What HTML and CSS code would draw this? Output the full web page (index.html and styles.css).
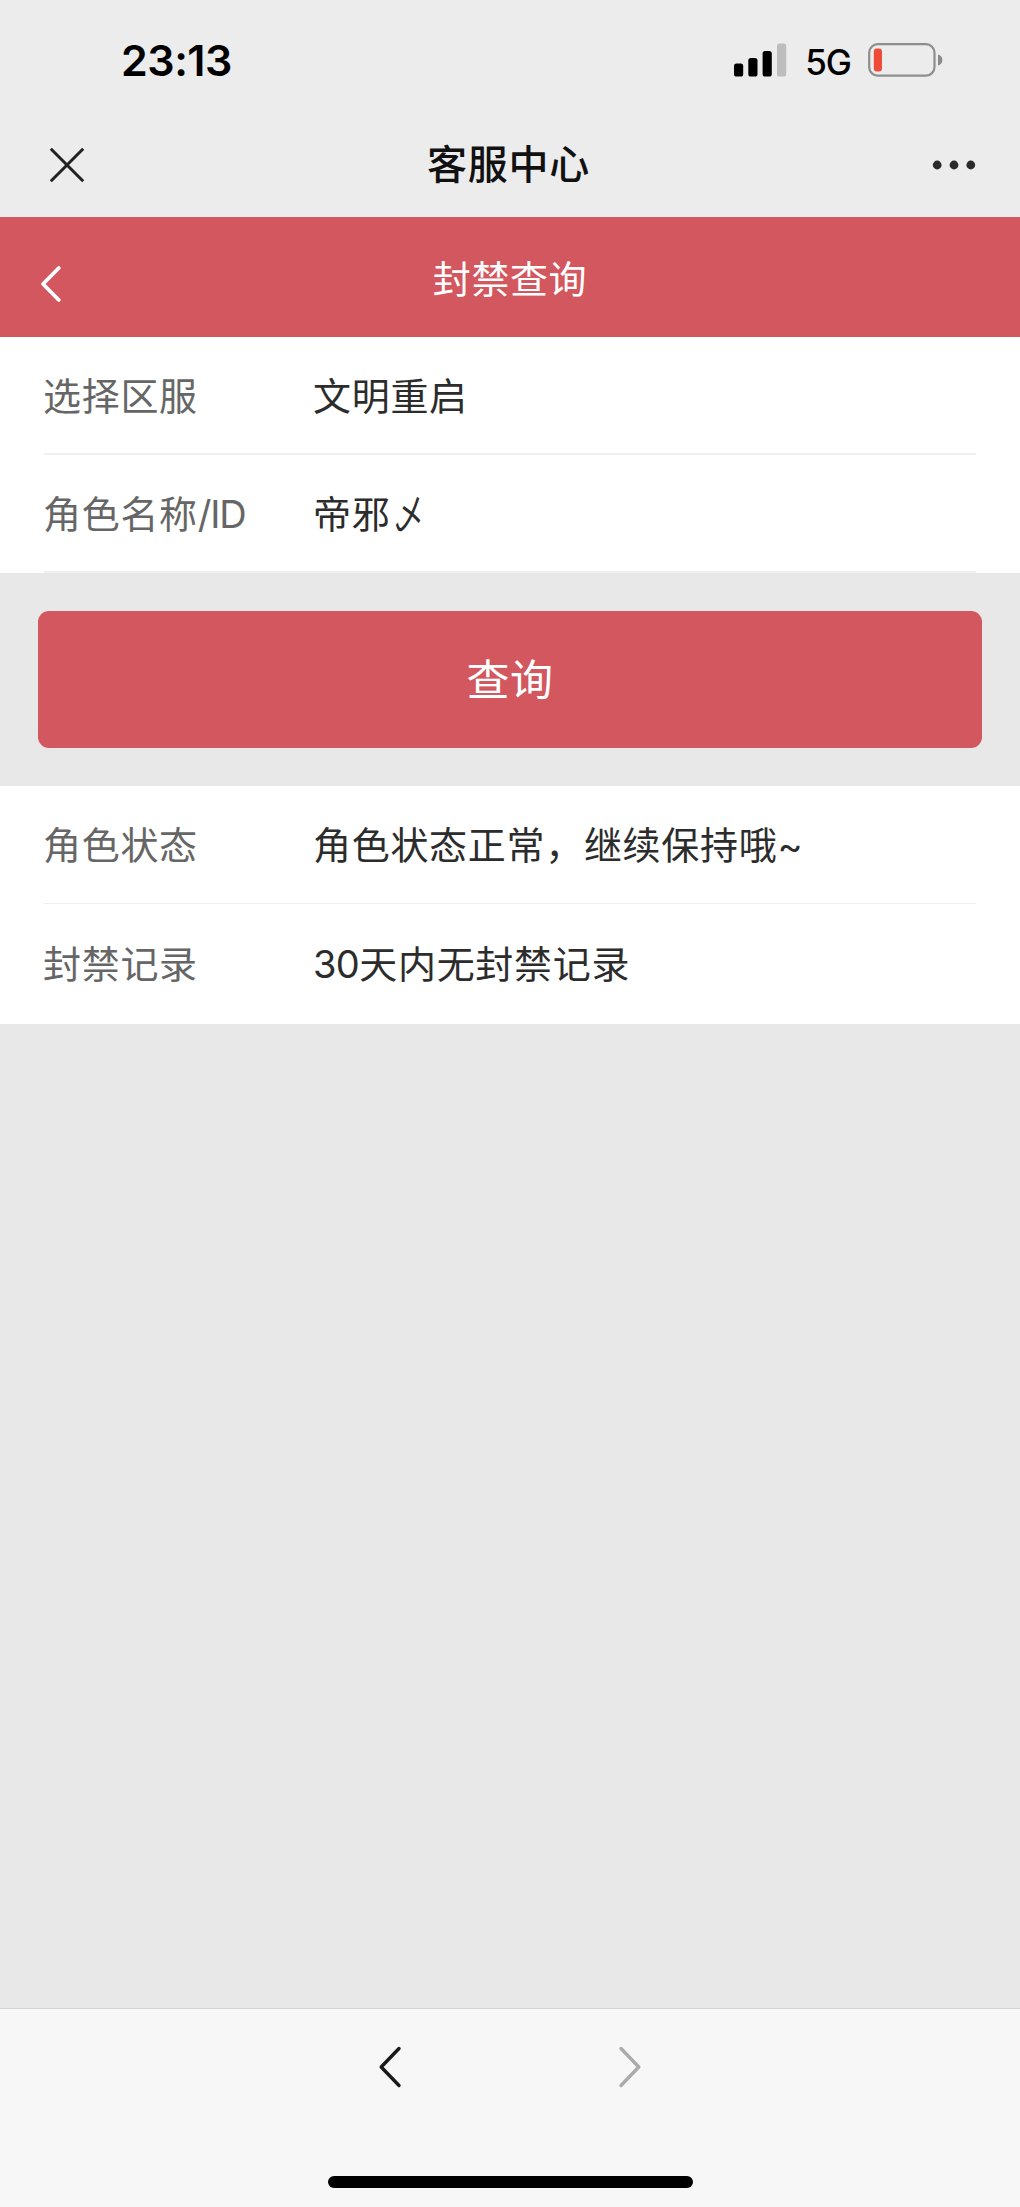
FILE: index.html
```html
<!DOCTYPE html>
<html lang="zh-CN">
<head>
<meta charset="utf-8">
<title>客服中心</title>
<link rel="stylesheet" href="styles.css">
</head>
<body>
<div class="screen">
  <div class="status-bar">
    <span class="time">23:13</span>
    <div class="indicators">
      <svg class="signal" width="53" height="34" viewBox="0 0 53 34">
        <rect x="0" y="20.5" width="9.2" height="13" rx="2.6"/>
        <rect x="14.3" y="15" width="9.2" height="18.5" rx="2.6"/>
        <rect x="28.6" y="8" width="9.2" height="25.5" rx="2.6"/>
        <rect x="43" y="0.5" width="9.2" height="33" rx="2.6" fill="#bdbdbd"/>
      </svg>
      <span class="network">5G</span>
      <svg class="battery" width="75" height="34" viewBox="0 0 75 34">
        <rect x="1.2" y="1.2" width="65.3" height="31.4" rx="8.5" fill="none" stroke="#8e8e8e" stroke-width="2.2"/>
        <rect x="5.8" y="5.6" width="8.2" height="22.8" rx="3.2" fill="#ee4b38"/>
        <path d="M70 11.5C75.8 12.2 75.8 21.8 70 22.5Z" fill="#8a8a8a"/>
      </svg>
    </div>
  </div>
  <div class="nav-bar">
    <svg width="36" height="36" viewBox="0 0 36 36"><path d="M1.8 1.8L34.2 34.2M34.2 1.8L1.8 34.2" fill="none" stroke="#222" stroke-width="3"/></svg>
    <h1 class="nav-title">客服中心</h1>
    <svg width="44" height="12" viewBox="0 0 44 12" fill="#2b2b2b"><circle cx="5.2" cy="6" r="4.4"/><circle cx="22" cy="6" r="4.4"/><circle cx="38.8" cy="6" r="4.4"/></svg>
  </div>
  <header class="page-header">
    <svg class="back" width="22" height="38" viewBox="0 0 22 38"><path d="M18.8 3L3 19L18.8 35" fill="none" stroke="#fff" stroke-width="3.8" stroke-linecap="round" stroke-linejoin="round"/></svg>
    <h2 class="page-title">封禁查询</h2>
  </header>
  <main class="content">
    <section class="panel form">
      <div class="row"><span class="label">选择区服</span><span class="value">文明重启</span></div>
      <div class="row"><span class="label">角色名称<span class="latin">/ID</span></span><span class="value">帝邪<span class="mark">乄</span></span></div>
    </section>
    <div class="action"><button class="query">查询</button></div>
    <section class="panel result">
      <div class="row"><span class="label">角色状态</span><span class="value">角色状态正常，继续保持哦~</span></div>
      <div class="row"><span class="label">封禁记录</span><span class="value"><span class="digits">30</span>天内无封禁记录</span></div>
    </section>
  </main>
  <footer class="toolbar">
    <div class="history">
      <svg width="24" height="42" viewBox="0 0 24 42"><path d="M21 2.5L3.2 21L21 39.5" fill="none" stroke="#1a1a1a" stroke-width="3.4" stroke-linecap="round" stroke-linejoin="round"/></svg>
      <svg width="24" height="42" viewBox="0 0 24 42"><path d="M3 2.5L20.8 21L3 39.5" fill="none" stroke="#ababab" stroke-width="3.4" stroke-linecap="round" stroke-linejoin="round"/></svg>
    </div>
    <div class="home-indicator"></div>
  </footer>
</div>
</body>
</html>
```
FILE: styles.css
```css
* { box-sizing: border-box; }
body {
  margin: 0;
  background: #e8e8e8;
  font-family: Inter, "Noto Sans CJK SC", sans-serif;
  color: #2c2c2c;
}
svg { display: block; flex: none; }
h1, h2 { margin: 0; }
.screen { display: flex; flex-direction: column; height: 2207px; }

.status-bar {
  display: flex;
  justify-content: space-between;
  align-items: center;
  height: 120px;
  padding: 0 77px 0 121px;
  background: #ececec;
  color: #000;
}
.time { font-size: 43px; font-weight: 600; line-height: 52px; padding-bottom: 0; letter-spacing: -0.5px; }
.indicators { display: flex; align-items: center; }
.network { margin: 3px 17px 0 18px; font-size: 35px; font-weight: 500; line-height: 40px; letter-spacing: -1px; }

.nav-bar {
  display: flex;
  justify-content: space-between;
  align-items: center;
  height: 97px;
  padding: 0 44px 8px 49px;
  background: #ececec;
}
.nav-title { font-size: 40px; font-weight: 500; line-height: 58px; letter-spacing: 0.7px; color: #111; }

.page-header {
  display: grid;
  grid-template-columns: 22px 1fr 22px;
  align-items: center;
  height: 120px;
  padding: 4px 40px 0;
  background: #d3575e;
}
.back { margin-top: 9px; }
.page-title {
  font-size: 38px;
  font-weight: 400;
  line-height: 56px;
  letter-spacing: 0.6px;
  text-align: center;
  color: #fff;
}

.content { flex: 1; }
.panel { background: #fff; padding: 0 44px; }
.row {
  display: flex;
  align-items: center;
  height: 118px;
  padding-bottom: 4px;
  border-bottom: 2px solid #efefef;
  font-size: 38px;
  letter-spacing: 0.7px;
}
.result .row { border-bottom-width: 1px; }
.result .row:last-child { height: 120px; padding-bottom: 6px; border-bottom: 0; }
.label { width: 270px; margin-left: -1px; color: #666; }
.latin { letter-spacing: -1.2px; }
.digits { letter-spacing: -0.6px; }
.mark { display: inline-block; transform: scaleX(0.76); }
.action { padding: 38px; }
.query {
  display: block;
  width: 100%;
  height: 137px;
  padding: 0;
  border: 0;
  border-radius: 11px;
  background: #d3575e;
  color: #fff;
  font: 400 43px/60px Inter, "Noto Sans CJK SC", sans-serif;
  letter-spacing: 0.6px;
}

.toolbar {
  display: flex;
  flex-direction: column;
  align-items: center;
  justify-content: space-between;
  height: 199px;
  padding: 37px 0 19px;
  border-top: 1px solid #d2d2d2;
  background: #f7f7f7;
}
.history { display: flex; gap: 216px; }
.home-indicator { width: 365px; height: 12px; border-radius: 6px; background: #000; }
```
